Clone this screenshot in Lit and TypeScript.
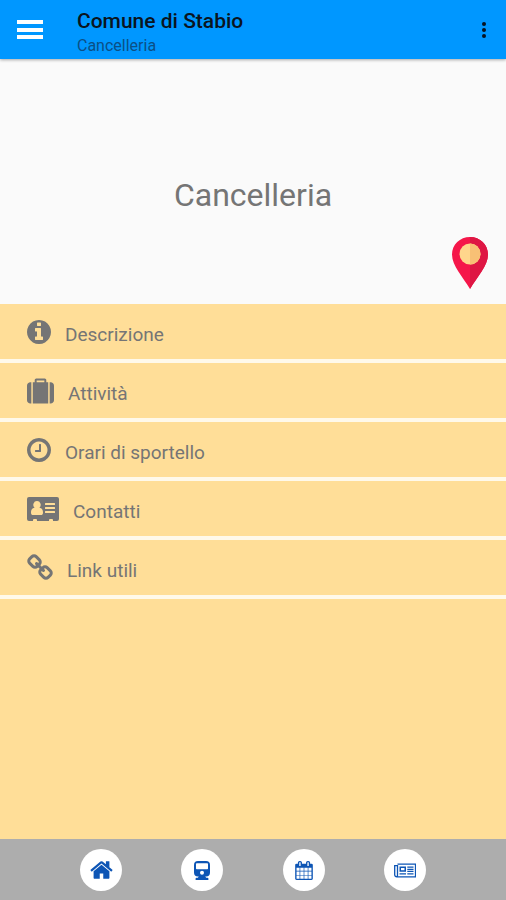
import { LitElement, html, svg, css } from "lit";
import { customElement } from "lit/decorators.js";

const info = svg`<path d="M1152 1376v-160q0-14-9-23t-23-9h-96v-512q0-14-9-23t-23-9h-320q-14 0-23 9t-9 23v160q0 14 9 23t23 9h96v320h-96q-14 0-23 9t-9 23v160q0 14 9 23t23 9h448q14 0 23-9t9-23zm-128-896v-160q0-14-9-23t-23-9h-192q-14 0-23 9t-9 23v160q0 14 9 23t23 9h192q14 0 23-9t9-23zm640 416q0 209-103 385.5t-279.5 279.5-385.5 103-385.5-103-279.5-279.5-103-385.5 103-385.5 279.5-279.5 385.5-103 385.5 103 279.5 279.5 103 385.5z"/>`;
const suitcase = svg`<path d="M640 256h512v-128h-512v128zm-352 0v1408h-64q-92 0-158-66t-66-158v-960q0-92 66-158t158-66h64zm1120 0v1408h-1024v-1408h128v-160q0-40 28-68t68-28h576q40 0 68 28t28 68v160h128zm384 224v960q0 92-66 158t-158 66h-64v-1408h64q92 0 158 66t66 158z"/>`;
const clock = svg`<path d="M1024 544v448q0 14-9 23t-23 9h-320q-14 0-23-9t-9-23v-64q0-14 9-23t23-9h224v-352q0-14 9-23t23-9h64q14 0 23 9t9 23zm416 352q0-148-73-273t-198-198-273-73-273 73-198 198-73 273 73 273 198 198 273 73 273-73 198-198 73-273zm224 0q0 209-103 385.5t-279.5 279.5-385.5 103-385.5-103-279.5-279.5-103-385.5 103-385.5 279.5-279.5 385.5-103 385.5 103 279.5 279.5 103 385.5z"/>`;
const card = svg`<path fill-rule="evenodd" d="M2 2h28a2 2 0 0 1 2 2v20a2 2 0 0 1-2 2h-4v-1a1 1 0 0 0-1-1h-2a1 1 0 0 0-1 1v1H10v-1a1 1 0 0 0-1-1H7a1 1 0 0 0-1 1v1H2a2 2 0 0 1-2-2V4a2 2 0 0 1 2-2z
  M10 6a3.6 3.8 0 0 0-2.4 6.700C5.200 12.800 4 14.800 4 17.700C4 19.200 4.800 20 6 20h8c1.200 0 2-.8 2-2.300c0-2.900-1.200-4.900-3.600-5A3.600 3.800 0 0 0 10 6z
  M18.500 8h9a.5.5 0 0 1 .5.5v1a.5.5 0 0 1-.5.5h-9a.5.5 0 0 1-.5-.5v-1a.5.5 0 0 1 .5-.5z
  M18.500 12h9a.5.5 0 0 1 .5.5v1a.5.5 0 0 1-.5.5h-9a.5.5 0 0 1-.5-.5v-1a.5.5 0 0 1 .5-.5z
  M18.500 16h9a.5.5 0 0 1 .5.5v1a.5.5 0 0 1-.5.5h-9a.5.5 0 0 1-.5-.5v-1a.5.5 0 0 1 .5-.5z"/>`;
const chain = svg`<path d="M1520 1216q0-40-28-68l-208-208q-28-28-68-28-42 0-72 32 3 3 19 18.500t21.500 21.500 15 19 13 25.500 3.500 27.500q0 40-28 68t-68 28q-15 0-27.500-3.500t-25.500-13-19-15-21.500-21.500-18.500-19q-33 31-33 73 0 40 28 68l206 207q27 27 68 27 40 0 68-26l147-146q28-28 28-67zm-703-705q0-40-28-68l-206-207q-28-28-68-28-39 0-68 27l-147 146q-28 28-28 67 0 40 28 68l208 208q27 27 68 27 42 0 72-31-3-3-19-18.500t-21.500-21.500-15-19-13-25.500-3.500-27.500q0-40 28-68t68-28q15 0 27.500 3.500t25.500 13 19 15 21.500 21.500 18.500 19q33-31 33-73zm895 705q0 120-85 203l-147 146q-83 83-203 83-121 0-204-85l-206-207q-83-83-83-203 0-123 88-209l-88-88q-86 88-208 88-120 0-204-84l-208-208q-84-84-84-204t85-203l147-146q83-83 203-83 121 0 204 85l206 207q83 83 83 203 0 123-88 209l88 88q86-88 208-88 120 0 204 84l208 208q84 84 84 204z"/>`;
const home = svg`<path d="M1472 992v480q0 26-19 45t-45 19h-384v-384h-256v384h-384q-26 0-45-19t-19-45v-480q0-1 .5-3t.5-3l575-474 575 474q1 2 1 6zm223-69l-62 74q-8 9-21 11h-3q-13 0-21-7l-692-577-692 577q-12 8-24 7-13-2-21-11l-62-74q-8-10-7-23.500t11-21.500l719-599q32-26 76-26t76 26l244 204v-195q0-14 9-23t23-9h192q14 0 23 9t9 23v408l219 182q10 8 11 21.500t-7 23.500z"/>`;
const train = svg`<path fill-rule="evenodd" d="M5 0h8a4 4 0 0 1 4 4v7.500a4 4 0 0 1-4 4h-.8l1 1.300h1.300c.6 0 .9.300.9.800V19H2.600v-1.400c0-.5.300-.8.900-.8h1.300l1-1.300H5a4 4 0 0 1-4-4V4a4 4 0 0 1 4-4z M3.700 2.200a.7.7 0 0 0-.7.7V7.500a.7.7 0 0 0 .7.7h10.600a.7.7 0 0 0 .7-.7V2.900a.7.7 0 0 0-.7-.7z M9 9.800a2 2 0 1 0 0 4a2 2 0 1 0 0-4z"/>`;
const calendar = svg`<path d="M192 1664h288v-288h-288v288zm352 0h320v-288h-320v288zm-352-352h288v-320h-288v320zm352 0h320v-320h-320v320zm-352-384h288v-288h-288v288zm736 736h320v-288h-320v288zm-384-736h320v-288h-320v288zm768 736h288v-288h-288v288zm-384-352h320v-320h-320v320zm-352-864v-288q0-13-9.500-22.500t-22.500-9.500h-64q-13 0-22.500 9.500t-9.500 22.500v288q0 13 9.500 22.500t22.500 9.500h64q13 0 22.500-9.500t9.500-22.500zm736 864h288v-320h-288v320zm-384-384h320v-288h-320v288zm384 0h288v-288h-288v288zm32-480v-288q0-13-9.500-22.500t-22.500-9.500h-64q-13 0-22.500 9.500t-9.500 22.500v288q0 13 9.500 22.500t22.500 9.500h64q13 0 22.500-9.500t9.500-22.500zm384-64v1280q0 52-38 90t-90 38h-1408q-52 0-90-38t-38-90v-1280q0-52 38-90t90-38h128v-96q0-66 47-113t113-47h64q66 0 113 47t47 113v96h384v-96q0-66 47-113t113-47h64q66 0 113 47t47 113v96h128q52 0 90 38t38 90z"/>`;
const news = svg`<path fill="none" stroke="currentColor" stroke-width="1.300" d="M3.500 1.200h18v12.600H2.700a2 2 0 0 1-2-2V2.700h2.800v9.300a1.400 1.400 0 0 1-1.400 1.600"/><path fill-rule="evenodd" d="M5.500 3.500h6.500v5.200H5.500z M7 5v2.300h3.500V5z M13.300 3.500h6.200v1.200h-6.200z M13.300 5.700h6.200v1.200h-6.200z M13.300 7.800h6.200v1.200h-6.200z M5.500 10.200h6.500v1.200H5.500z M13.300 10.200h6.200v1.200h-6.200z"/>`;

const sections = [
  { label: "Descrizione", icon: info, box: "128 0 1536 1792", width: 24 },
  { label: "Attività", icon: suitcase, box: "0 -64 1792 1792", width: 27 },
  { label: "Orari di sportello", icon: clock, box: "128 0 1536 1792", width: 24 },
  { label: "Contatti", icon: card, box: "0 0 32 28", width: 32 },
  { label: "Link utili", icon: chain, box: "64 0 1664 1792", width: 26 },
];

const tabs = [
  { label: "Home", icon: home, box: "80 240 1632 1312", width: 23, height: 18 },
  { label: "Trasporti", icon: train, box: "0 0 18 19", width: 18, height: 19 },
  { label: "Calendario", icon: calendar, box: "64 0 1664 1792", width: 18, height: 19 },
  { label: "Notizie", icon: news, box: "0 0 22 15", width: 22, height: 15 },
];

@customElement("app-root")
export class AppRoot extends LitElement {
  static styles = css`
    :host {
      display: flex;
      flex-direction: column;
      min-height: 100vh;
      background: #ffde98;
      color: #757575;
      font-family: Roboto, "Liberation Sans", sans-serif;
    }
    svg { display: block; fill: currentColor; flex: none; }
    button { border: 0; margin: 0; padding: 0; background: none; color: inherit; font: inherit; cursor: pointer; }
    h1, h2, p, ul { margin: 0; padding: 0; font-weight: 400; list-style: none; }
    .bar {
      display: flex;
      align-items: center;
      height: 59px;
      padding: 0 16px;
      box-sizing: border-box;
      background: #0097ff;
      box-shadow: 0 1px 3px #0005;
      z-index: 1;
    }
    .menu { color: #fff; }
    .titles { flex: 1; padding: 6px 0 0 33px; }
    .title { font-size: 21px; line-height: 26px; font-weight: 500; color: #0a1420; }
    .subtitle { font-size: 16px; line-height: 24px; color: #0b4f86; }
    .more { color: #061422; }
    .hero {
      display: grid;
      grid-template-rows: 1fr auto;
      height: 245px;
      padding: 0 16px 13px;
      box-sizing: border-box;
      background: #fafafa;
    }
    .heading { align-self: end; text-align: center; font-size: 32px; line-height: 40px; padding-bottom: 20px; }
    .pin { justify-self: end; }
    .row {
      display: flex;
      align-items: center;
      gap: 14px;
      width: 100%;
      height: 59px;
      padding: 0 27px;
      border-bottom: 4px solid #fff9ea;
      text-align: left;
    }
    .label { font-size: 19px; line-height: 24px; padding-top: 6px; }
    .tabs {
      display: grid;
      grid-template-columns: repeat(4, 1fr);
      justify-items: center;
      margin-top: auto;
      padding: 10px 10% 9px;
      background: #adadad;
    }
    .tab {
      display: flex;
      align-items: center;
      justify-content: center;
      width: 42px;
      height: 42px;
      border-radius: 50%;
      background: #fff;
      color: #0d55b5;
    }
  `;

  render() {
    return html`
      <header class="bar">
        <button class="menu" aria-label="Menu">
          <svg width="28" height="24" viewBox="0 0 28 24"><path d="M1 2h26v4H1z M1 10h26v4H1z M1 17h26v4H1z" /></svg>
        </button>
        <div class="titles">
          <h1 class="title">Comune di Stabio</h1>
          <p class="subtitle">Cancelleria</p>
        </div>
        <button class="more" aria-label="Altre opzioni">
          <svg width="12" height="20" viewBox="0 0 12 20">
            <circle cx="6" cy="4" r="2" /><circle cx="6" cy="10" r="2" /><circle cx="6" cy="16" r="2" />
          </svg>
        </button>
      </header>
      <section class="hero">
        <h2 class="heading">Cancelleria</h2>
        <button class="pin" aria-label="Mappa">
          <svg width="40" height="56" viewBox="0 0 40 56">
            <path fill="#f5174a" d="M20 2C10 2 2 9.500 2 19.500C2 31 13 42 20 54C27 42 38 31 38 19.500C38 9.500 30 2 20 2z" />
            <path fill="#de1643" d="M20 54C27 42 38 31 38 19.500C38 9.500 30 2 20 2z" />
            <circle cx="20" cy="19" r="10.500" fill="#ffd68c" />
            <path fill="#f8c075" d="M20 8.500a10.500 10.500 0 0 1 0 21z" />
          </svg>
        </button>
      </section>
      <ul>
        ${sections.map(
          (s) => html`<li>
            <button class="row">
              <svg width=${s.width} height="28" viewBox=${s.box} aria-hidden="true">${s.icon}</svg>
              <span class="label">${s.label}</span>
            </button>
          </li>`
        )}
      </ul>
      <nav class="tabs">
        ${tabs.map(
          (t) => html`<button class="tab" aria-label=${t.label}>
            <svg width=${t.width} height=${t.height} viewBox=${t.box} aria-hidden="true">${t.icon}</svg>
          </button>`
        )}
      </nav>
    `;
  }
}
